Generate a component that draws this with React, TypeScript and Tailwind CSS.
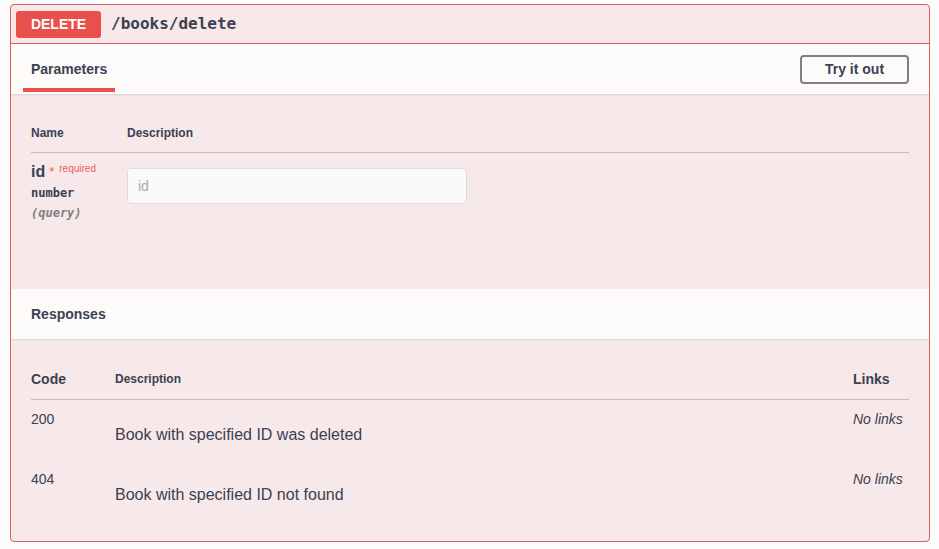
import React from "react";

const sans = { fontFamily: '"Liberation Sans", Arial, sans-serif' };
const mono = { fontFamily: '"DejaVu Sans Mono", "Liberation Mono", monospace' };

export default function App() {
  return (
    <div className="min-h-[549px] w-[939px] bg-[#fcfcfc] pl-[10px] pt-[4px] text-[#3b4151]" style={sans}>
      <div className="w-[920px] h-[538px] rounded-[4px] border border-[#e05d5d] bg-[#f7e8e9] overflow-hidden flex flex-col">
        {/* header */}
        <div className="h-[39px] border-b border-[#e05d5d] flex items-center pl-[5px] shrink-0">
          <div className="w-[85px] h-[27px] rounded-[3px] bg-[#e9504c] text-white text-[14px] font-bold flex items-center justify-center">
            DELETE
          </div>
          <div className="ml-[10px] text-[16px] font-bold text-[#3b4151]" style={mono}>
            /books/delete
          </div>
        </div>

        {/* parameters tab header */}
        <div className="h-[50px] bg-[#fdfafa] shadow-[0_1px_2px_rgba(0,0,0,0.1)] flex items-center justify-between px-[12px] shrink-0 relative z-10">
          <div className="h-full flex flex-col justify-end">
            <div className="px-[8px] text-[14px] font-bold leading-[18px] mb-[10px]">Parameters</div>
            <div className="h-[4px] bg-[#e9504c] mb-[2px]" />
          </div>
          <button className="w-[109px] h-[29px] mr-[8px] rounded-[4px] border-2 border-[#808080] bg-transparent text-[14px] font-bold text-[#3b4151] flex items-center justify-center">
            Try it out
          </button>
        </div>

        {/* parameters body */}
        <div className="h-[195px] px-[20px] shrink-0">
          <div className="pt-[31px] pb-[11px] flex text-[12px] font-bold leading-[16px] border-b border-[#c7bbbe]">
            <div className="w-[96px]">Name</div>
            <div>Description</div>
          </div>
          <div className="flex pt-[9px]">
            <div className="w-[96px]">
              <div className="flex items-start leading-[20px]">
                <span className="text-[16px] font-bold">id</span>
                <span className="ml-[4px] text-[13px] text-[#e8615f] leading-[14px] mt-[3px]">*</span>
                <span className="ml-[5px] text-[10px] text-[#e8615f] leading-[12px] mt-[1px]">required</span>
              </div>
              <div className="text-[12px] font-semibold leading-[20px] mt-[1px]" style={mono}>number</div>
              <div className="text-[12px] italic font-semibold leading-[20px] text-[#808080]" style={mono}>(query)</div>
            </div>
            <div className="pt-[6px]">
              <input
                placeholder="id"
                className="w-[340px] h-[36px] rounded-[4px] border border-[#dcdcdc] bg-[#fafafa] px-[10px] text-[14px] text-[#3b4151] placeholder:text-[#a9a9a9] outline-none"
                style={sans}
              />
            </div>
          </div>
        </div>

        {/* responses header */}
        <div className="h-[50px] bg-[#fdfafa] shadow-[0_1px_2px_rgba(0,0,0,0.1)] flex items-center px-[20px] shrink-0 relative z-10">
          <div className="text-[14px] font-bold">Responses</div>
        </div>

        {/* responses body */}
        <div className="px-[20px] pt-[31px]">
          <div className="flex items-end pb-[11px] border-b border-[#c7bbbe] leading-[18px]">
            <div className="w-[84px] text-[14px] font-bold">Code</div>
            <div className="flex-1 text-[12px] font-bold">Description</div>
            <div className="w-[56px] text-[14px] font-bold">Links</div>
          </div>
          {[
            ["200", "Book with specified ID was deleted"],
            ["404", "Book with specified ID not found"],
          ].map(([code, desc]) => (
            <div key={code} className="flex h-[60px] pt-[11px]">
              <div className="w-[84px] text-[14px] leading-[16px]">{code}</div>
              <div className="flex-1 text-[16px] leading-[20px] mt-[14px]">{desc}</div>
              <div className="w-[56px] text-[14px] italic leading-[16px]">No links</div>
            </div>
          ))}
        </div>
      </div>
    </div>
  );
}
